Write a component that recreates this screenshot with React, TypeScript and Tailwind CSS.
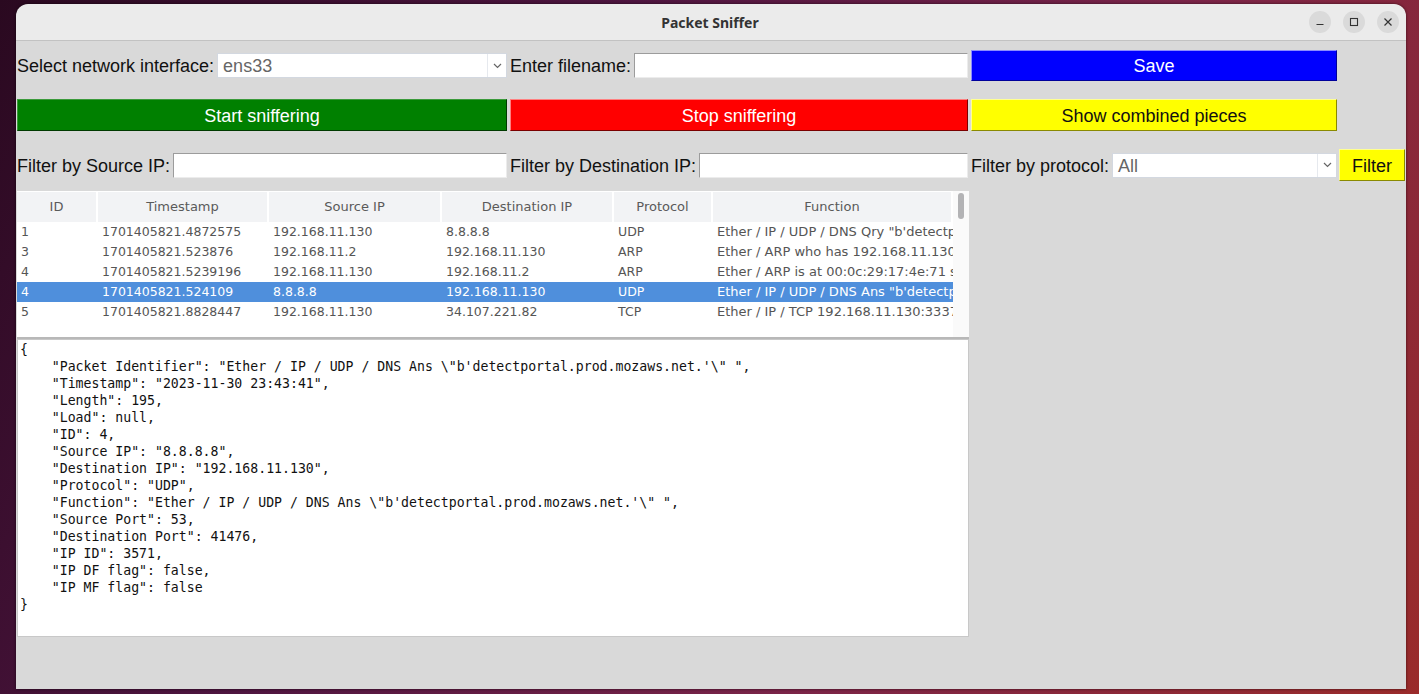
import React from "react";

const sans = "font-['Liberation_Sans',Arial,sans-serif]";
const dejavu = "font-['DejaVu_Sans',sans-serif]";

const rows = [
  ["1", "1701405821.4872575", "192.168.11.130", "8.8.8.8", "UDP", `Ether / IP / UDP / DNS Qry "b'detectportal.prod.mozaws.net.'"`],
  ["3", "1701405821.523876", "192.168.11.2", "192.168.11.130", "ARP", "Ether / ARP who has 192.168.11.130 says 192.168.11.2"],
  ["4", "1701405821.5239196", "192.168.11.130", "192.168.11.2", "ARP", "Ether / ARP is at 00:0c:29:17:4e:71 says 192.168.11.130"],
  ["4", "1701405821.524109", "8.8.8.8", "192.168.11.130", "UDP", `Ether / IP / UDP / DNS Ans "b'detectportal.prod.mozaws.net.'"`],
  ["5", "1701405821.8828447", "192.168.11.130", "34.107.221.82", "TCP", "Ether / IP / TCP 192.168.11.130:33374 > 34.107.221.82:http S"],
];

const columns = [
  { name: "ID", w: "w-[81px]" },
  { name: "Timestamp", w: "w-[171px]" },
  { name: "Source IP", w: "w-[173px]" },
  { name: "Destination IP", w: "w-[172px]" },
  { name: "Protocol", w: "w-[99px]" },
  { name: "Function", w: "w-[240px]" },
];

const json = String.raw`{
    "Packet Identifier": "Ether / IP / UDP / DNS Ans \"b'detectportal.prod.mozaws.net.'\" ",
    "Timestamp": "2023-11-30 23:43:41",
    "Length": 195,
    "Load": null,
    "ID": 4,
    "Source IP": "8.8.8.8",
    "Destination IP": "192.168.11.130",
    "Protocol": "UDP",
    "Function": "Ether / IP / UDP / DNS Ans \"b'detectportal.prod.mozaws.net.'\" ",
    "Source Port": 53,
    "Destination Port": 41476,
    "IP ID": 3571,
    "IP DF flag": false,
    "IP MF flag": false
}`;

function Label({ children }: { children: React.ReactNode }) {
  return <span className={`${sans} text-[18px] text-[#111] whitespace-nowrap mt-[2px]`}>{children}</span>;
}

function Entry() {
  return (
    <div className="flex-1 h-[25px] bg-white border border-[#9c9c9c] border-b-[#ececec] border-r-[#ececec]" />
  );
}

function Combo({ value }: { value: string }) {
  return (
    <div className="flex-1 h-[25px] bg-white border border-[#d3d8e0] flex items-center">
      <span className={`${sans} text-[18px] text-[#666] pl-[5px] pt-[2px] flex-1`}>{value}</span>
      <div className="w-[19px] h-full border-l border-[#e6e9ee] flex items-center justify-center">
        <svg width="9" height="6" viewBox="0 0 9 6">
          <path d="M1 1 L4.5 4.5 L8 1" fill="none" stroke="#666" strokeWidth="1.2" />
        </svg>
      </div>
    </div>
  );
}

function WinButton({ children }: { children: React.ReactNode }) {
  return (
    <div className="w-[22px] h-[22px] rounded-full bg-[#dadada] flex items-center justify-center">
      {children}
    </div>
  );
}

export default function App() {
  return (
    <div className="w-[1419px] h-[694px] overflow-hidden bg-[linear-gradient(120deg,#2a0920_0%,#4e1540_35%,#7a2448_65%,#9a2b2a_100%)] pt-[4px] pl-[16px]">
      <div className="w-[1390px] h-[685px] flex flex-col rounded-t-[12px] overflow-hidden shadow-[0_0_3px_rgba(0,0,0,0.6)]">
        {/* title bar */}
        <div className="h-[37px] bg-[#ebebeb] border-b border-[#c2c2c2] flex items-center relative">
          <div className="flex-1 text-center font-['Noto_Sans',sans-serif] font-bold text-[14px] text-[#333] pr-[2px]">
            Packet Sniffer
          </div>
          <div className="absolute right-[7px] top-[7px] flex gap-[12px]">
            <WinButton>
              <svg width="10" height="10" viewBox="0 0 10 10">
                <path d="M1.5 7.5 H8.5" stroke="#333" strokeWidth="1.2" />
              </svg>
            </WinButton>
            <WinButton>
              <svg width="10" height="10" viewBox="0 0 10 10">
                <rect x="1.5" y="1.5" width="7" height="7" fill="none" stroke="#333" strokeWidth="1.1" />
              </svg>
            </WinButton>
            <WinButton>
              <svg width="10" height="10" viewBox="0 0 10 10">
                <path d="M1.5 1.5 L8.5 8.5 M8.5 1.5 L1.5 8.5" stroke="#333" strokeWidth="1.2" />
              </svg>
            </WinButton>
          </div>
        </div>

        {/* content */}
        <div className="flex-1 bg-[#d9d9d9] pl-px">
          {/* row 1 */}
          <div className="mt-[9px] h-[31px] flex items-center">
            <div className="w-[490px] flex items-center gap-[3px]">
              <Label>Select network interface:</Label>
              <Combo value="ens33" />
            </div>
            <div className="w-[458px] ml-[3px] flex items-center gap-[3px]">
              <Label>Enter filename:</Label>
              <Entry />
            </div>
            <button className={`ml-[3px] w-[366px] h-[31px] pt-[2px] bg-[#0000ff] border border-[#8c8cff] border-b-[#00009a] border-r-[#00009a] text-white ${sans} text-[18px]`}>
              Save
            </button>
          </div>

          {/* row 2 */}
          <div className="mt-[18px] h-[32px] flex">
            <button className={`w-[490px] h-full pt-[2px] bg-[#008000] border border-[#3a9a3a] border-b-[#003a00] border-r-[#003a00] text-white ${sans} text-[18px]`}>
              Start sniffering
            </button>
            <button className={`ml-[3px] w-[458px] h-full pt-[2px] bg-[#ff0000] border border-[#ff8080] border-b-[#7a0000] border-r-[#7a0000] text-white ${sans} text-[18px]`}>
              Stop sniffering
            </button>
            <button className={`ml-[3px] w-[366px] h-full pt-[2px] bg-[#ffff00] border border-[#ffff90] border-b-[#8a8a00] border-r-[#8a8a00] text-[#111] ${sans} text-[18px]`}>
              Show combined pieces
            </button>
          </div>

          {/* row 3 */}
          <div className="mt-[18px] h-[32px] flex items-center">
            <div className="w-[490px] flex items-center gap-[3px]">
              <Label>Filter by Source IP:</Label>
              <Entry />
            </div>
            <div className="w-[458px] ml-[3px] flex items-center gap-[3px]">
              <Label>Filter by Destination IP:</Label>
              <Entry />
            </div>
            <div className="w-[366px] ml-[3px] flex items-center gap-[3px]">
              <Label>Filter by protocol:</Label>
              <Combo value="All" />
            </div>
            <button className={`ml-[2px] w-[66px] h-[32px] pt-[2px] bg-[#ffff00] border border-[#ffff90] border-b-[#8a8a00] border-r-[#8a8a00] text-[#111] ${sans} text-[18px]`}>
              Filter
            </button>
          </div>

          {/* table */}
          <div className="mt-[10px] w-[952px] h-[148px] bg-white border-b-2 border-[#b8b8b8] flex">
            <div className="w-[936px] overflow-hidden">
              <div className="flex h-[31px] pt-px bg-white">
                {columns.map((c) => (
                  <div
                    key={c.name}
                    className={`${c.w} h-[30px] bg-[#f2f3f5] border-r-[2px] border-white flex items-center justify-center ${dejavu} text-[13px] text-[#5a5a5a]`}
                  >
                    {c.name}
                  </div>
                ))}
              </div>
              {rows.map((r, i) => (
                <div
                  key={i}
                  className={`flex h-[20px] items-center ${dejavu} text-[12.5px] ${i === 3 ? "bg-[#4f8fdc] text-white" : "text-[#555]"}`}
                >
                  {r.map((cell, j) => (
                    <div
                      key={j}
                      className={`${columns[j].w} pl-[4px] whitespace-nowrap overflow-hidden ${j === 5 ? "text-[13px]" : ""}`}
                    >
                      {cell}
                    </div>
                  ))}
                </div>
              ))}
            </div>
            <div className="w-[16px] bg-[#fafafa] pt-[2px] flex justify-center">
              <div className="w-[6px] h-[26px] rounded-full bg-[#b3b3b5]" />
            </div>
          </div>

          {/* detail text */}
          <div className="w-[952px] h-[298px] bg-white border border-[#c8c8c8] pl-[2px] pt-px overflow-hidden">
            <pre className="font-['DejaVu_Sans_Mono',monospace] text-[13.2px] leading-[17px] text-[#111]">{json}</pre>
          </div>
        </div>
      </div>
    </div>
  );
}
